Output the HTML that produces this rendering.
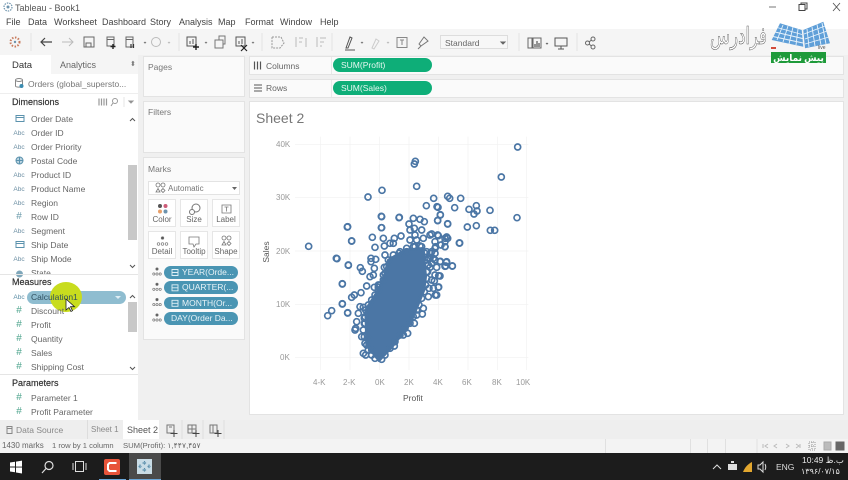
<!DOCTYPE html>
<html><head><meta charset="utf-8"><style>
html,body{margin:0;padding:0;width:848px;height:480px;overflow:hidden;background:#f0f0f0}
body{font-family:"Liberation Sans","Noto Sans CJK SC",sans-serif;font-size:9px;color:#555;position:relative;filter:blur(.3px)}
.a{position:absolute;white-space:nowrap}
.b{position:absolute}
.panel{position:absolute;background:#fff;border:1px solid #e3e3e3;box-sizing:border-box}
.f{position:absolute;left:31px;font-size:8.5px;color:#666;white-space:nowrap}
.i{position:absolute;left:12px;width:14px;text-align:center;font-size:6.5px;color:#6d8fa3;white-space:nowrap}
.h{position:absolute;left:12px;font-size:9px;color:#333;-webkit-text-stroke:.2px #333}
.pill{position:absolute;height:12.5px;border-radius:7px;background:#4a95b3;color:#e8f3f7;font-size:8.5px;line-height:12.5px;white-space:nowrap;overflow:hidden}
.g{position:absolute;height:14px;border-radius:7px;background:#0eae78;color:#e6f7f1;font-size:8.5px;line-height:14px;left:333px;width:99px;padding-left:8px;box-sizing:border-box}
.mk{position:absolute;width:28px;height:28px;background:#fff;border:1px solid #e6e6e6;box-sizing:border-box;font-size:8px;text-align:center;color:#666}
.mk span{position:absolute;left:-2px;right:-2px;bottom:2px}
svg{position:absolute;overflow:visible}
.m{position:absolute;top:17px;font-size:9px;color:#444}
.tk{position:absolute;font-size:8px;color:#999}
</style></head><body>
<!-- title bar and menu -->
<div class="b" style="left:0;top:0;width:848px;height:29px;background:#fff"></div>
<svg style="left:3px;top:2px" width="10" height="10" viewBox="0 0 10 10"><circle cx="5" cy="5" r="4" fill="none" stroke="#6d93ad" stroke-width="1.2" stroke-dasharray="1.5 1"/><circle cx="5" cy="5" r="1.5" fill="#6d93ad"/></svg>
<div class="a" style="left:15px;top:3px;font-size:9px;color:#555">Tableau - Book1</div>
<div class="m" style="left:6px">File</div><div class="m" style="left:28px">Data</div><div class="m" style="left:54px">Worksheet</div><div class="m" style="left:102px">Dashboard</div><div class="m" style="left:150px">Story</div><div class="m" style="left:179px">Analysis</div><div class="m" style="left:218px">Map</div><div class="m" style="left:245px">Format</div><div class="m" style="left:280px">Window</div><div class="m" style="left:320px">Help</div>
<svg style="left:766px;top:0" width="82" height="14"><path d="M3 7h7" stroke="#777" stroke-width="1"/><path d="M33 4.500h6v6h-6zM35 4.500v-1.500h6v6h-2" fill="none" stroke="#444" stroke-width="1"/><path d="M67 3l7 8M74 3l-7 8" stroke="#555" stroke-width=".9"/></svg>
<!-- toolbar -->
<div class="b" style="left:0;top:29px;width:848px;height:26px;background:#f5f5f5"></div>
<svg style="left:0;top:29px" width="620" height="26" fill="none" stroke="#777" stroke-width="1">
<circle cx="15" cy="13" r="4.500" stroke="#c77a5c" stroke-width="2" stroke-dasharray="1.500 1.500"/><circle cx="15" cy="13" r="1.200" fill="#6d93ad" stroke="none"/>
<path d="M31 4v18M179 4v18M262 4v18M332 4v18M519 4v18M577 4v18" stroke="#e4e4e4"/>
<path d="M52 17h-11M45 13l-4 4 4 4" transform="translate(0,-4)" stroke="#444" stroke-width="1.200"/>
<path d="M62 13h11M69 9l4 4-4 4" stroke="#bbb"/>
<path d="M84 8h10v10h-10zM86 18v-4h5v4" stroke="#666"/>
<path d="M107 8h7v9h-7zM107 10.500h7" stroke="#666"/><path d="M113 15v5M110.500 17.500h5" stroke="#222" stroke-width="1.400"/>
<path d="M126 8h7v10h-7zM126 10.500h7" stroke="#666"/><path d="M131 15v4M133.500 15v4" stroke="#333" stroke-width="1.200"/>
<path d="M144 13l1 1 1-1" stroke="#777"/>
<circle cx="156" cy="13" r="4.500" stroke="#bbb"/><path d="M168 13l1 1 1-1" stroke="#bbb"/>
<path d="M187 8v9h9v-9zM190 15v-3M193 15v-5" stroke="#555"/><path d="M196 15v6M193 18h6" stroke="#222" stroke-width="1.400"/><path d="M205 13l1 1 1-1"/>
<path d="M215 11h8v8h-8zM219 11v-4h6v8h-2" stroke="#777"/>
<path d="M236 8v9h9v-9zM239 15v-3M242 15v-5" stroke="#555"/><path d="M241 16l6 6M247 16l-6 6" stroke="#222" stroke-width="1.200"/><path d="M252 13l1 1 1-1"/>
<path d="M272 8h9l3 6-4 5h-8z" stroke="#999" stroke-dasharray="2 1"/>
<path d="M296 8v10M299 9h4M299 13h3M306 9v9" stroke="#bbb"/>
<path d="M317 8v10M320 9h6M320 13h4M320 17h2" stroke="#bbb"/>
<path d="M346 19l4-11 2 1-4 10zM345 21h10" stroke="#555"/><path d="M361 13l1 1 1-1"/>
<path d="M372 19l4-9 3 2-5 8z" stroke="#ccc"/><path d="M387 13l1 1 1-1" stroke="#bbb"/>
<path d="M397 8.500h10v10h-10zM400 11h4M402 11v5" stroke="#888"/>
<path d="M419 15l5-7 4 4-7 5zM418 20l3-3" stroke="#777"/>
</svg>
<div class="b" style="left:440px;top:35px;width:68px;height:14px;background:#f7f7f7;border:1px solid #ddd;box-sizing:border-box"></div>
<div class="a" style="left:445px;top:37.500px;font-size:8.500px;color:#666">Standard</div>
<svg style="left:527px;top:35px" width="85" height="16" fill="none" stroke="#666"><path d="M-26 7l2 2 2-2z" fill="#666"/><path d="M1 3h4v10h-4zM6 3h8v10h-8z"/><path d="M8 12v-3M10 12v-6M12 12v-4" stroke="#333"/><path d="M19 8l1 1 1-1"/><path d="M28 3h12v8h-12zM34 11v3M31 14h6" stroke="#555"/><circle cx="66" cy="4" r="2"/><circle cx="60.500" cy="8" r="2"/><circle cx="66" cy="12" r="2"/><path d="M62 7l2.500-2M62 9l2.500 2"/></svg>
<!-- Data pane -->
<div class="b" style="left:0;top:55px;width:138px;height:365px;background:#fff"></div>
<div class="b" style="left:51px;top:55px;width:87px;height:19px;background:#f5f5f5"></div>
<div class="a" style="left:12px;top:60px;font-size:9.500px;color:#333">Data</div>
<div class="a" style="left:60px;top:60px;font-size:9px;color:#666">Analytics</div>
<div class="a" style="left:130px;top:60px;font-size:7px;color:#777">⬍</div>
<svg style="left:14px;top:77px" width="10" height="12" fill="none" stroke="#888"><ellipse cx="5" cy="3" rx="3.500" ry="1.500"/><path d="M1.500 3v6c0 1 5 2 7 0v-6"/><circle cx="7.500" cy="9" r="2" fill="#3a8bb0" stroke="none"/></svg>
<div class="a" style="left:28px;top:79px;font-size:8.500px;color:#777">Orders (global_supersto...</div>
<div class="b" style="left:0;top:93px;width:138px;height:1px;background:#eee"></div>
<div class="h" style="top:97px">Dimensions</div>
<svg style="left:98px;top:97px" width="38" height="10" fill="none" stroke="#999"><path d="M1 1.500v7M3.500 1.500v7M6 1.500v7M8.500 1.500v7" stroke-width="1.200"/><circle cx="17" cy="4" r="2.500"/><path d="M15 6l-2 3"/><path d="M26 0v10" stroke="#e5e5e5"/><path d="M31 4l2 2 2-2z" fill="#777"/></svg>
<svg style="left:15px;top:114px" width="12" height="9" fill="none" stroke="#5b92ad"><path d="M1 1.500h8v6h-8zM1 3.500h8"/></svg>
<div class="f" style="top:114px">Order Date</div>
<div class="i" style="top:130px">Abc</div><div class="f" style="top:128px">Order ID</div>
<div class="i" style="top:144px">Abc</div><div class="f" style="top:142px">Order Priority</div>
<svg style="left:15px;top:156px" width="10" height="10" fill="none" stroke="#5b92ad"><circle cx="4.500" cy="4.500" r="3.500" fill="#bcd5e2"/><path d="M1 4.500h7M4.500 1v7"/></svg>
<div class="f" style="top:156px">Postal Code</div>
<div class="i" style="top:172px">Abc</div><div class="f" style="top:170px">Product ID</div>
<div class="i" style="top:186px">Abc</div><div class="f" style="top:184px">Product Name</div>
<div class="i" style="top:200px">Abc</div><div class="f" style="top:198px">Region</div>
<div class="i" style="top:211px;font-size:10px;color:#6a9aaa">#</div><div class="f" style="top:212px">Row ID</div>
<div class="i" style="top:228px">Abc</div><div class="f" style="top:226px">Segment</div>
<svg style="left:15px;top:240px" width="12" height="9" fill="none" stroke="#5b92ad"><path d="M1 1.500h8v6h-8zM1 3.500h8"/></svg>
<div class="f" style="top:240px">Ship Date</div>
<div class="i" style="top:256px">Abc</div><div class="f" style="top:254px">Ship Mode</div>
<div class="f" style="top:268px;height:7px;overflow:hidden">State</div>
<svg style="left:15px;top:269px" width="10" height="5" fill="#7fa7ba"><circle cx="4.500" cy="5" r="3.500"/></svg>
<div class="b" style="left:128px;top:165px;width:9px;height:75px;background:#c8c8c8"></div>
<svg style="left:128px;top:115px" width="9" height="160" fill="none" stroke="#555" stroke-width="1"><path d="M2 6l2.500-2.500 2.500 2.500M2 150l2.500 2.500 2.500-2.500"/></svg>
<div class="b" style="left:0;top:274px;width:138px;height:1px;background:#e5e5e5"></div>
<div class="h" style="top:277px">Measures</div>
<div class="b" style="left:27px;top:291px;width:99px;height:12.500px;border-radius:7px;background:#8fbdd0"></div>
<div class="b" style="left:50px;top:282px;width:32px;height:30px;border-radius:50%;background:#c8dc1e"></div>
<div class="i" style="top:294px;color:#5b8da5">Abc</div>
<div class="f" style="top:292px;color:#2f4f5f">Calculation1</div>
<svg style="left:114px;top:295px" width="8" height="5"><path d="M1 1h6l-3 3z" fill="#dfeef4"/></svg>
<svg style="left:65px;top:298px" width="10" height="15"><path d="M1 1v11l3-2.500 2 4 1.500-.8-2-4h4z" fill="#fff" stroke="#222" stroke-width=".8"/></svg>
<div class="i" style="top:305px;font-size:10px;color:#4fa58e">#</div><div class="f" style="top:306px">Discount</div>
<div class="i" style="top:319px;font-size:10px;color:#4fa58e">#</div><div class="f" style="top:320px">Profit</div>
<div class="i" style="top:333px;font-size:10px;color:#4fa58e">#</div><div class="f" style="top:334px">Quantity</div>
<div class="i" style="top:347px;font-size:10px;color:#4fa58e">#</div><div class="f" style="top:348px">Sales</div>
<div class="i" style="top:361px;font-size:10px;color:#4fa58e">#</div><div class="f" style="top:362px">Shipping Cost</div>
<div class="b" style="left:128px;top:302px;width:9px;height:30px;background:#c8c8c8"></div>
<svg style="left:128px;top:292px" width="9" height="84" fill="none" stroke="#555"><path d="M2 6l2.500-2.500 2.500 2.500M2 75l2.500 2.500 2.500-2.500"/></svg>
<div class="b" style="left:0;top:374px;width:138px;height:1px;background:#e5e5e5"></div>
<div class="h" style="top:378px">Parameters</div>
<div class="i" style="top:392px;font-size:10px;color:#4fa58e">#</div><div class="f" style="top:393px">Parameter 1</div>
<div class="i" style="top:406px;font-size:10px;color:#4fa58e">#</div><div class="f" style="top:407px">Profit Parameter</div>
<!-- Shelves -->
<div class="panel" style="left:143px;top:56px;width:102px;height:41px;background:#fafafa"></div><div class="a" style="left:148px;top:62px;font-size:8.500px;color:#777">Pages</div>
<div class="panel" style="left:143px;top:101px;width:102px;height:52px;background:#fafafa"></div><div class="a" style="left:148px;top:107px;font-size:8.500px;color:#777">Filters</div>
<div class="panel" style="left:143px;top:157px;width:102px;height:183px;background:#fafafa"></div><div class="a" style="left:148px;top:164px;font-size:8.500px;color:#777">Marks</div>
<div class="b" style="left:148px;top:181px;width:92px;height:14px;background:#fff;border:1px solid #e3e3e3;box-sizing:border-box"></div>
<svg style="left:155px;top:182px" width="12" height="12" fill="none" stroke="#777" stroke-width=".8"><circle cx="3" cy="3" r="2"/><circle cx="8" cy="3" r="2"/><path d="M3 6.500l2 3.500h-4zM8 6.500l2 2-2 2-2-2z"/></svg>
<div class="a" style="left:168px;top:184px;font-size:8px;color:#777">Automatic</div>
<svg style="left:231px;top:186px" width="7" height="5"><path d="M1 1h5l-2.500 3z" fill="#666"/></svg>
<div class="mk" style="left:148px;top:199px"><svg style="left:8px;top:3px" width="12" height="12"><circle cx="3" cy="3" r="2" fill="#555"/><circle cx="8.500" cy="3" r="2" fill="#cd5c78"/><circle cx="3" cy="8.500" r="2" fill="#e9a06a"/><circle cx="8.500" cy="8.500" r="2" fill="#6d93ad"/></svg><span>Color</span></div>
<div class="mk" style="left:180px;top:199px"><svg style="left:7px;top:3px" width="13" height="13" fill="none" stroke="#777"><circle cx="8" cy="5" r="4"/><circle cx="4" cy="9" r="2.500" fill="#fff"/></svg><span>Size</span></div>
<div class="mk" style="left:212px;top:199px"><svg style="left:8px;top:4px" width="12" height="11" fill="none" stroke="#777" stroke-width=".8"><path d="M1 1h9v8h-9zM3.500 3h4M5.500 3v4.500"/></svg><span>Label</span></div>
<div class="mk" style="left:148px;top:231px"><svg style="left:7px;top:4px" width="14" height="11" fill="none" stroke="#777" stroke-width=".7"><circle cx="6.500" cy="2" r="1.300" fill="#555"/><circle cx="2.500" cy="8" r="1.300"/><circle cx="6.500" cy="8" r="1.300"/><circle cx="10.500" cy="8" r="1.300"/></svg><span>Detail</span></div>
<div class="mk" style="left:180px;top:231px"><svg style="left:7px;top:4px" width="13" height="12" fill="none" stroke="#777" stroke-width=".8"><path d="M1 1h10v7h-3l-2 3-1-3h-4z"/></svg><span>Tooltip</span></div>
<div class="mk" style="left:212px;top:231px"><svg style="left:8px;top:3px" width="12" height="12" fill="none" stroke="#777" stroke-width=".8"><circle cx="3" cy="3" r="2"/><circle cx="8" cy="3" r="2"/><path d="M3 6.500l2 3.500h-4zM8 6.500l2 2-2 2-2-2z"/></svg><span>Shape</span></div>
<svg style="left:152px;top:266px" width="14" height="58" fill="none" stroke="#777" stroke-width=".7"><g><circle cx="5" cy="3" r="1.200" fill="#555"/><circle cx="1.800" cy="8" r="1.100"/><circle cx="5" cy="8" r="1.100"/><circle cx="8.200" cy="8" r="1.100"/></g><g transform="translate(0,15.300)"><circle cx="5" cy="3" r="1.200" fill="#555"/><circle cx="1.800" cy="8" r="1.100"/><circle cx="5" cy="8" r="1.100"/><circle cx="8.200" cy="8" r="1.100"/></g><g transform="translate(0,30.600)"><circle cx="5" cy="3" r="1.200" fill="#555"/><circle cx="1.800" cy="8" r="1.100"/><circle cx="5" cy="8" r="1.100"/><circle cx="8.200" cy="8" r="1.100"/></g><g transform="translate(0,46)"><circle cx="5" cy="3" r="1.200" fill="#555"/><circle cx="1.800" cy="8" r="1.100"/><circle cx="5" cy="8" r="1.100"/><circle cx="8.200" cy="8" r="1.100"/></g></svg>
<div class="pill" style="left:164px;top:266px;width:74px;padding-left:18px;box-sizing:border-box">YEAR(Orde...</div>
<div class="pill" style="left:164px;top:281px;width:74px;padding-left:18px;box-sizing:border-box">QUARTER(...</div>
<div class="pill" style="left:164px;top:296.500px;width:74px;padding-left:18px;box-sizing:border-box">MONTH(Or...</div>
<div class="pill" style="left:164px;top:312px;width:74px;padding-left:7px;box-sizing:border-box">DAY(Order Da...</div>
<svg style="left:171px;top:268px" width="9" height="50" fill="none" stroke="#dff0f6" stroke-width=".9"><path d="M1 1.500h6v6h-6zM1 4.500h6M1 16.800h6v6h-6zM1 19.800h6M1 32.300h6v6h-6zM1 35.300h6"/></svg>
<div class="panel" style="left:249px;top:56px;width:595px;height:19px;background:#fafafa"></div>
<div class="panel" style="left:249px;top:79px;width:595px;height:19px;background:#fafafa"></div>
<div class="b" style="left:331px;top:57px;width:1px;height:17px;background:#e8e8e8"></div><div class="b" style="left:331px;top:80px;width:1px;height:17px;background:#e8e8e8"></div>
<svg style="left:253px;top:60px" width="10" height="34" fill="none" stroke="#555"><path d="M1.500 1.500v8M4.500 1.500v8M7.500 1.500v8" stroke-width="1.200"/><path d="M1 25h8M1 28h8M1 31h8"/></svg>
<div class="a" style="left:266px;top:61px;font-size:8.500px;color:#666">Columns</div>
<div class="a" style="left:266px;top:83px;font-size:8.500px;color:#666">Rows</div>
<div class="g" style="top:58px">SUM(Profit)</div>
<div class="g" style="top:81px">SUM(Sales)</div>
<!-- logo -->
<svg style="left:705px;top:18px" width="130" height="48" viewBox="0 0 130 48">
<text x="5" y="26" textLength="57" lengthAdjust="spacingAndGlyphs" font-family="'Noto Sans CJK SC','DejaVu Sans',sans-serif" font-size="24" fill="#fff" stroke="#555" stroke-width=".55">فرادرس</text>
<path d="M66.700 22L75 5.300 96.700 12 98.300 28.700zM98.300 12L118.300 3.700 125 25.300 100 30.300z" fill="#5f9fd8"/>
<path d="M72 9.500L97 16.500M70 14L97.500 20.500M68 18.500L98 25M72 22L78 7M78 24L83 8M84 26L88 9M91 27L93 11M99 16L120 8M100 21L122 13M100 26L124 19M104 29L102 11M110 28L107 9M116 27L112 6.500M121 26L117 5" stroke="#e8f3fc" stroke-width=".9" fill="none"/>
<path d="M66 29h5v2h-5z" fill="#d24a3a"/>
<text x="113" y="31" font-size="5" fill="#555" font-family="Liberation Sans">live</text>
<rect x="66" y="34" width="55" height="11" fill="#1e9a3a"/>
<text x="93.500" y="43" text-anchor="middle" font-family="'Noto Sans CJK SC','DejaVu Sans',sans-serif" font-size="9" font-weight="bold" fill="#fff">پیش نمایش</text>
</svg>
<!-- Viz -->
<div class="panel" style="left:249px;top:101px;width:595px;height:314px"></div>
<div class="a" style="left:256px;top:110px;font-size:14px;color:#777">Sheet 2</div>
<svg style="left:250px;top:100px" width="300" height="310" viewBox="0 0 900 930">
<g stroke="#f1f1f1" stroke-width="2" fill="none"><path d="M135 133h700M135 293h700M135 453h700M135 613h700M135 773h700M212 110v700M300 110v700M389 110v700M477 110v700M565 110v700M654 110v700M742 110v700M830 110v700"/></g>
<path d="M387 782L350 735L347 630L385 570L405 520L415 480L465 450L520 445L527 530L522 570L505 612L480 672L425 742Z" fill="#4b76a5" stroke="#4b76a5" stroke-width="8" stroke-linejoin="round"/>
<g fill="none" stroke="#4b76a5" stroke-width="5">
<circle cx="803" cy="141" r="9"/><circle cx="754" cy="231" r="9"/><circle cx="496" cy="184" r="9"/><circle cx="493" cy="192" r="9"/><circle cx="500" cy="259" r="9"/><circle cx="396" cy="271" r="9"/><circle cx="354" cy="291" r="9"/><circle cx="551" cy="295" r="9"/><circle cx="593" cy="289" r="9"/><circle cx="599" cy="295" r="9"/><circle cx="632" cy="295" r="9"/><circle cx="529" cy="317" r="9"/><circle cx="561" cy="320" r="9"/><circle cx="564" cy="322" r="9"/><circle cx="614" cy="323" r="9"/><circle cx="657" cy="328" r="9"/><circle cx="679" cy="317" r="9"/><circle cx="681" cy="333" r="9"/><circle cx="672" cy="342" r="9"/><circle cx="720" cy="331" r="9"/><circle cx="571" cy="345" r="9"/><circle cx="801" cy="353" r="9"/><circle cx="394" cy="349" r="9"/><circle cx="447" cy="353" r="9"/><circle cx="563" cy="361" r="9"/><circle cx="593" cy="371" r="9"/><circle cx="679" cy="377" r="9"/><circle cx="652" cy="381" r="9"/><circle cx="721" cy="391" r="9"/><circle cx="734" cy="391" r="9"/><circle cx="292" cy="381" r="9"/><circle cx="394" cy="383" r="9"/><circle cx="305" cy="423" r="9"/><circle cx="176" cy="439" r="9"/><circle cx="628" cy="429" r="9"/><circle cx="259" cy="475" r="9"/><circle cx="295" cy="495" r="9"/><circle cx="277" cy="551" r="9"/><circle cx="277" cy="611" r="9"/><circle cx="245" cy="632" r="9"/><circle cx="233" cy="647" r="9"/><circle cx="293" cy="639" r="9"/><circle cx="607" cy="498" r="9"/><circle cx="589" cy="487" r="9"/><circle cx="585" cy="499" r="9"/><circle cx="571" cy="484" r="9"/><circle cx="566" cy="527" r="9"/><circle cx="566" cy="561" r="9"/><circle cx="553" cy="543" r="9"/><circle cx="556" cy="585" r="9"/>
<circle cx="540" cy="405" r="9"/><circle cx="565" cy="407" r="9"/><circle cx="590" cy="411" r="9"/><circle cx="585" cy="425" r="9"/><circle cx="585" cy="440" r="9"/><circle cx="555" cy="425" r="9"/><circle cx="555" cy="445" r="9"/><circle cx="540" cy="460" r="9"/><circle cx="550" cy="475" r="9"/>
<g transform="translate(255,330)">
<circle cx="38" cy="50" r="9"/><circle cx="50" cy="93" r="9"/><circle cx="6" cy="146" r="9"/><circle cx="40" cy="166" r="9"/><circle cx="76" cy="173" r="9"/><circle cx="82" cy="184" r="9"/>
<circle cx="22" cy="222" r="9"/><circle cx="22" cy="282" r="9"/><circle cx="38" cy="308" r="9"/><circle cx="50" cy="262" r="9"/><circle cx="58" cy="255" r="9"/><circle cx="78" cy="248" r="9"/><circle cx="95" cy="228" r="9"/><circle cx="118" cy="232" r="9"/><circle cx="130" cy="232" r="9"/><circle cx="105" cy="200" r="9"/><circle cx="115" cy="195" r="9"/><circle cx="118" cy="175" r="9"/><circle cx="108" cy="145" r="9"/><circle cx="108" cy="155" r="9"/><circle cx="122" cy="148" r="9"/><circle cx="150" cy="135" r="9"/><circle cx="148" cy="172" r="9"/><circle cx="145" cy="195" r="9"/><circle cx="130" cy="225" r="9"/><circle cx="75" cy="290" r="9"/><circle cx="85" cy="292" r="9"/><circle cx="70" cy="310" r="9"/><circle cx="88" cy="325" r="9"/><circle cx="65" cy="335" r="9"/><circle cx="62" cy="355" r="9"/><circle cx="60" cy="360" r="9"/><circle cx="80" cy="380" r="9"/><circle cx="90" cy="340" r="9"/><circle cx="100" cy="385" r="9"/><circle cx="95" cy="405" r="9"/><circle cx="85" cy="430" r="9"/><circle cx="92" cy="435" r="9"/><circle cx="110" cy="420" r="9"/>
<circle cx="140" cy="20" r="9"/><circle cx="193" cy="22" r="9"/><circle cx="235" cy="25" r="9"/><circle cx="255" cy="28" r="9"/><circle cx="268" cy="35" r="9"/><circle cx="222" cy="42" r="9"/><circle cx="238" cy="55" r="9"/><circle cx="260" cy="60" r="9"/><circle cx="225" cy="60" r="9"/><circle cx="240" cy="75" r="9"/><circle cx="225" cy="90" r="9"/><circle cx="245" cy="90" r="9"/><circle cx="265" cy="85" r="9"/><circle cx="290" cy="72" r="9"/><circle cx="308" cy="75" r="9"/><circle cx="330" cy="85" r="9"/><circle cx="338" cy="85" r="9"/><circle cx="318" cy="105" r="9"/><circle cx="330" cy="110" r="9"/><circle cx="302" cy="110" r="9"/><circle cx="290" cy="125" r="9"/><circle cx="285" cy="145" r="9"/><circle cx="300" cy="130" r="9"/><circle cx="270" cy="130" r="9"/><circle cx="198" cy="78" r="9"/><circle cx="178" cy="85" r="9"/><circle cx="175" cy="100" r="9"/><circle cx="165" cy="100" r="9"/><circle cx="145" cy="85" r="9"/><circle cx="148" cy="108" r="9"/><circle cx="112" cy="82" r="9"/><circle cx="120" cy="112" r="9"/><circle cx="192" cy="130" r="9"/><circle cx="140" cy="53" r="9"/><circle cx="316" cy="14" r="9"/><circle cx="308" cy="32" r="9"/><circle cx="338" cy="42" r="9"/><circle cx="374" cy="99" r="9"/><circle cx="215" cy="125" r="9"/><circle cx="240" cy="110" r="9"/><circle cx="260" cy="110" r="9"/>
<circle cx="290" cy="160" r="9"/><circle cx="315" cy="155" r="9"/><circle cx="335" cy="155" r="9"/><circle cx="352" cy="168" r="9"/><circle cx="332" cy="168" r="9"/><circle cx="305" cy="172" r="9"/><circle cx="285" cy="172" r="9"/><circle cx="275" cy="185" r="9"/><circle cx="315" cy="198" r="9"/><circle cx="300" cy="195" r="9"/><circle cx="290" cy="210" r="9"/><circle cx="282" cy="235" r="9"/><circle cx="310" cy="232" r="9"/><circle cx="295" cy="235" r="9"/><circle cx="305" cy="255" r="9"/><circle cx="280" cy="260" r="9"/><circle cx="265" cy="295" r="9"/><circle cx="262" cy="312" r="9"/><circle cx="245" cy="315" r="9"/><circle cx="238" cy="340" r="9"/><circle cx="218" cy="370" r="9"/><circle cx="205" cy="375" r="9"/><circle cx="178" cy="408" r="9"/><circle cx="275" cy="150" r="9"/><circle cx="300" cy="150" r="9"/>
<circle cx="90" cy="400" r="9"/><circle cx="88" cy="380" r="9"/><circle cx="85" cy="360" r="9"/><circle cx="88" cy="340" r="9"/><circle cx="90" cy="320" r="9"/><circle cx="92" cy="300" r="9"/><circle cx="100" cy="285" r="9"/><circle cx="110" cy="270" r="9"/><circle cx="120" cy="255" r="9"/><circle cx="130" cy="240" r="9"/><circle cx="135" cy="225" r="9"/><circle cx="145" cy="210" r="9"/><circle cx="150" cy="190" r="9"/><circle cx="155" cy="170" r="9"/><circle cx="160" cy="150" r="9"/><circle cx="175" cy="135" r="9"/><circle cx="195" cy="125" r="9"/><circle cx="215" cy="115" r="9"/><circle cx="235" cy="110" r="9"/><circle cx="255" cy="108" r="9"/>
<circle cx="275" cy="125" r="9"/><circle cx="280" cy="145" r="9"/><circle cx="280" cy="165" r="9"/><circle cx="278" cy="185" r="9"/><circle cx="275" cy="205" r="9"/><circle cx="272" cy="225" r="9"/><circle cx="268" cy="245" r="9"/><circle cx="260" cy="265" r="9"/><circle cx="252" cy="285" r="9"/><circle cx="245" cy="300" r="9"/><circle cx="235" cy="320" r="9"/><circle cx="225" cy="340" r="9"/><circle cx="210" cy="355" r="9"/><circle cx="195" cy="375" r="9"/><circle cx="180" cy="395" r="9"/><circle cx="165" cy="415" r="9"/><circle cx="150" cy="435" r="9"/><circle cx="140" cy="448" r="9"/><circle cx="100" cy="420" r="9"/><circle cx="110" cy="435" r="9"/><circle cx="120" cy="445" r="9"/>
</g></g></svg>
<div class="tk" style="left:276px;top:140px">40K</div><div class="tk" style="left:276px;top:193px">30K</div><div class="tk" style="left:276px;top:247px">20K</div><div class="tk" style="left:276px;top:300px">10K</div><div class="tk" style="left:280px;top:353px">0K</div>
<div class="tk" style="left:313px;top:378px">4-K</div><div class="tk" style="left:343px;top:378px">2-K</div><div class="tk" style="left:375px;top:378px">0K</div><div class="tk" style="left:404px;top:378px">2K</div><div class="tk" style="left:433px;top:378px">4K</div><div class="tk" style="left:462px;top:378px">6K</div><div class="tk" style="left:492px;top:378px">8K</div><div class="tk" style="left:516px;top:378px">10K</div>
<div class="a" style="left:403px;top:393px;font-size:8.500px;color:#555">Profit</div>
<div class="a" style="left:266px;top:252px;font-size:8.500px;color:#555;transform:translate(-50%,-50%) rotate(-90deg)">Sales</div>
<!-- tabs -->
<div class="b" style="left:0;top:420px;width:848px;height:19px;background:#eee"></div>
<svg style="left:6px;top:425px" width="8" height="10" fill="none" stroke="#888"><path d="M1 1.500h5v7h-5zM1 3.500h5"/></svg>
<div class="a" style="left:16px;top:425px;font-size:8.500px;color:#888">Data Source</div>
<div class="b" style="left:87px;top:420px;width:1px;height:19px;background:#ddd"></div>
<div class="a" style="left:91px;top:425px;font-size:8px;color:#888">Sheet 1</div>
<div class="b" style="left:123px;top:420px;width:38px;height:19px;background:#fff"></div>
<div class="a" style="left:127px;top:424.500px;font-size:9px;color:#555">Sheet 2</div>
<svg style="left:161px;top:420px" width="66" height="19" fill="none" stroke="#777"><path d="M6 5h7v8h-7zM8 7h3"/><path d="M13 10v7M9.500 13.500h7" stroke="#444"/><path d="M27 5h8v8h-8zM31 5v8M27 9h8"/><path d="M35 10v7M31.500 13.500h7" stroke="#444"/><path d="M49 5h7v8h-7zM52 5v8"/><path d="M57 10v7M53.500 13.500h7" stroke="#444"/><path d="M-1 0v19M21 0v19M42 0v19M63 0v19" stroke="#ddd"/></svg>
<!-- status -->
<div class="b" style="left:0;top:439px;width:848px;height:14px;background:#f3f3f3"></div>
<div class="a" style="left:2px;top:441px;font-size:8px;color:#666">1430 marks</div>
<div class="a" style="left:52px;top:441px;font-size:7.600px;color:#666">1 row by 1 column</div>
<div class="a" style="left:123px;top:441px;font-size:7.700px;color:#666">SUM(Profit): ۱,۴۴۷,۴۵۷</div>
<svg style="left:600px;top:439px" width="248" height="14" fill="none" stroke="#e0e0e0"><path d="M5.500 0v14M90.500 0v14M107.500 0v14M125.500 0v14M157 0v14"/><path d="M163 5v4M168 5l-3 2 3 2M177 5l-3 2 3 2M186 5l3 2-3 2M196 5l3 2-3 2M200 5v4" stroke="#bbb"/><path d="M209 3h6v8h-6zM212 3v8M209 7h6" stroke="#999" stroke-dasharray="1 1"/><rect x="224" y="3" width="7" height="8" fill="#bbb" stroke="#aaa"/><rect x="236" y="3" width="8" height="8" fill="#666" stroke="#666"/></svg>
<!-- taskbar -->
<div class="b" style="left:0;top:453px;width:848px;height:27px;background:#1c1c1c"></div>
<div class="b" style="left:129px;top:453px;width:32px;height:27px;background:#4a4a4a"></div>
<svg style="left:10px;top:461px" width="12" height="12" fill="#fff"><path d="M0 1.500l5-.8v4.800h-5zM6 .6l6-1v6h-6zM0 6.500h5v4.800l-5-.8zM6 6.500h6v6l-6-1z"/></svg>
<svg style="left:41px;top:460px" width="14" height="14" fill="none" stroke="#ddd" stroke-width="1.200"><circle cx="8" cy="5.500" r="4"/><path d="M5 8.500l-4 4.500"/></svg>
<svg style="left:72px;top:460px" width="16" height="13" fill="none" stroke="#ddd"><path d="M3.500 1.500h8v10h-8zM1 3v7M14 3v7"/></svg>
<div class="b" style="left:104px;top:459px;width:16px;height:16px;background:#e8543a;border-radius:2px"></div>
<svg style="left:106px;top:461px" width="12" height="12" fill="none" stroke="#fff" stroke-width="2"><path d="M10.500 2h-7l-1.500 1.500v5l1.500 1.500h7"/></svg>
<div class="b" style="left:99px;top:478.500px;width:27px;height:1.500px;background:#6aa6d8"></div>
<div class="b" style="left:129px;top:478.500px;width:32px;height:1.500px;background:#6aa6d8"></div>
<div class="b" style="left:137px;top:459px;width:15px;height:15px;background:#c9dce6"></div>
<svg style="left:137px;top:459px" width="15" height="15" fill="none" stroke="#5c8fac" stroke-width="1.200"><path d="M7.500 2v4M5.500 4h4M7.500 9v4M5.500 11h4M3 5.500v4M1.500 7.500h3M12 5.500v4M10.500 7.500h3" stroke-dasharray="1.500 .6"/></svg>
<svg style="left:710px;top:458px" width="62" height="18" fill="none" stroke="#ddd"><path d="M3 11l4-4 4 4" stroke-width="1"/><rect x="18" y="6" width="9" height="6" fill="#ddd" stroke="none"/><path d="M21 4h3" stroke-width="2"/><path d="M33 14c2-5 5-8 9-10v10z" fill="#e3a72f" stroke="none"/><path d="M48 7h2l3-3v10l-3-3h-2z"/><path d="M55 6c1 2 1 4 0 6"/></svg>
<div class="a" style="left:776px;top:462px;font-size:8.500px;color:#ddd">ENG</div>
<div class="a" style="left:802px;top:455px;font-size:8.500px;color:#e8e8e8">ب.ظ 10:49</div>
<div class="a" style="left:801px;top:467px;font-size:8px;color:#e8e8e8">۱۳۹۶/۰۷/۱۵</div>
</body></html>
